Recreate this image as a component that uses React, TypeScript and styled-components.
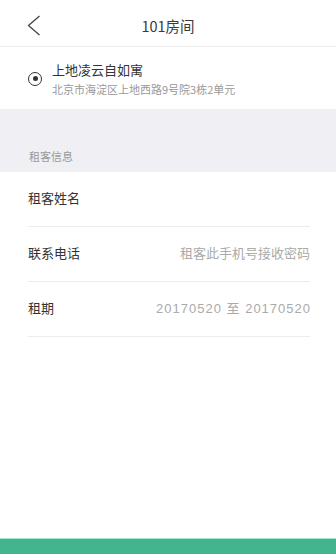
import React from "react";
import styled, { createGlobalStyle } from "styled-components";

const Global = createGlobalStyle`
  html, body { margin: 0; padding: 0; background: #fff; }
  body { font-family: "Noto Sans CJK SC", "Noto Sans", sans-serif; -webkit-font-smoothing: antialiased; }
  * { box-sizing: border-box; }
`;

const Page = styled.div`
  width: 336px;
  height: 554px;
  display: flex;
  flex-direction: column;
  background: #fff;
  overflow: hidden;
`;

const Header = styled.header`
  height: 47px;
  flex: none;
  display: grid;
  grid-template-columns: 60px 1fr 60px;
  align-items: center;
  padding-top: 6px;
  border-bottom: 1px solid #ececec;
`;

const BackButton = styled.button`
  border: 0;
  background: none;
  padding: 0 0 0 27px;
  height: 40px;
  display: flex;
  align-items: center;
  cursor: pointer;
`;

const Title = styled.h1`
  margin: 0;
  font-size: 14.5px;
  font-weight: 400;
  color: #3a3a3a;
  text-align: center;
  line-height: 40px;
`;

const Address = styled.section`
  height: 62px;
  flex: none;
  display: flex;
  align-items: center;
  gap: 10px;
  padding: 1px 0 0 28px;
`;

const Radio = styled.span`
  width: 14px;
  height: 14px;
  border-radius: 50%;
  border: 1.3px solid #333;
  display: flex;
  align-items: center;
  justify-content: center;
  flex: none;
  &::after {
    content: "";
    width: 5px;
    height: 5px;
    border-radius: 50%;
    background: #333;
  }
`;

const AddressText = styled.div`
  display: flex;
  flex-direction: column;
  gap: 2px;
`;

const Community = styled.div`
  font-size: 13px;
  color: #333;
  line-height: 18px;
`;

const Street = styled.div`
  font-size: 11px;
  color: #999;
  line-height: 16px;
`;

const SectionBand = styled.div`
  height: 63px;
  flex: none;
  background: #efeff4;
  display: flex;
  align-items: flex-end;
  padding: 0 0 9px 29px;
  font-size: 11px;
  color: #999;
  line-height: 14px;
`;

const Rows = styled.div`
  display: flex;
  flex-direction: column;
  padding: 0 26px 0 28px;
`;

const Row = styled.div`
  height: 55px;
  display: flex;
  align-items: center;
  justify-content: space-between;
  border-bottom: 1px solid #ececec;
  padding-bottom: 3px;
`;

const Label = styled.span`
  font-size: 13px;
  color: #333;
`;

const Value = styled.span<{ $spaced?: boolean }>`
  font-size: 13px;
  color: #aaa;
  font-family: ${(p) =>
    p.$spaced
      ? '"Liberation Sans", "Noto Sans CJK SC", sans-serif'
      : '"Noto Sans CJK SC", sans-serif'};
  letter-spacing: ${(p) => (p.$spaced ? "1px" : "0")};
  margin-right: ${(p) => (p.$spaced ? "-1px" : "0")};
`;

const Spacer = styled.div`
  flex: 1;
`;

const SubmitBar = styled.div`
  height: 16px;
  flex: none;
  background: #42b58f;
  border-top: 1px solid #a6e2cd;
`;

export default function App() {
  return (
    <>
      <Global />
      <Page>
        <Header>
          <BackButton aria-label="返回">
            <svg width="14" height="22" viewBox="0 0 14 22">
              <polyline
                points="12.5,1 1.5,10.5 12.5,20"
                fill="none"
                stroke="#444"
                strokeWidth="1.3"
              />
            </svg>
          </BackButton>
          <Title>101房间</Title>
          <span />
        </Header>
        <Address>
          <Radio />
          <AddressText>
            <Community>上地凌云自如寓</Community>
            <Street>北京市海淀区上地西路9号院3栋2单元</Street>
          </AddressText>
        </Address>
        <SectionBand>租客信息</SectionBand>
        <Rows>
          <Row>
            <Label>租客姓名</Label>
          </Row>
          <Row>
            <Label>联系电话</Label>
            <Value>租客此手机号接收密码</Value>
          </Row>
          <Row>
            <Label>租期</Label>
            <Value $spaced>20170520 至 20170520</Value>
          </Row>
        </Rows>
        <Spacer />
        <SubmitBar />
      </Page>
    </>
  );
}
